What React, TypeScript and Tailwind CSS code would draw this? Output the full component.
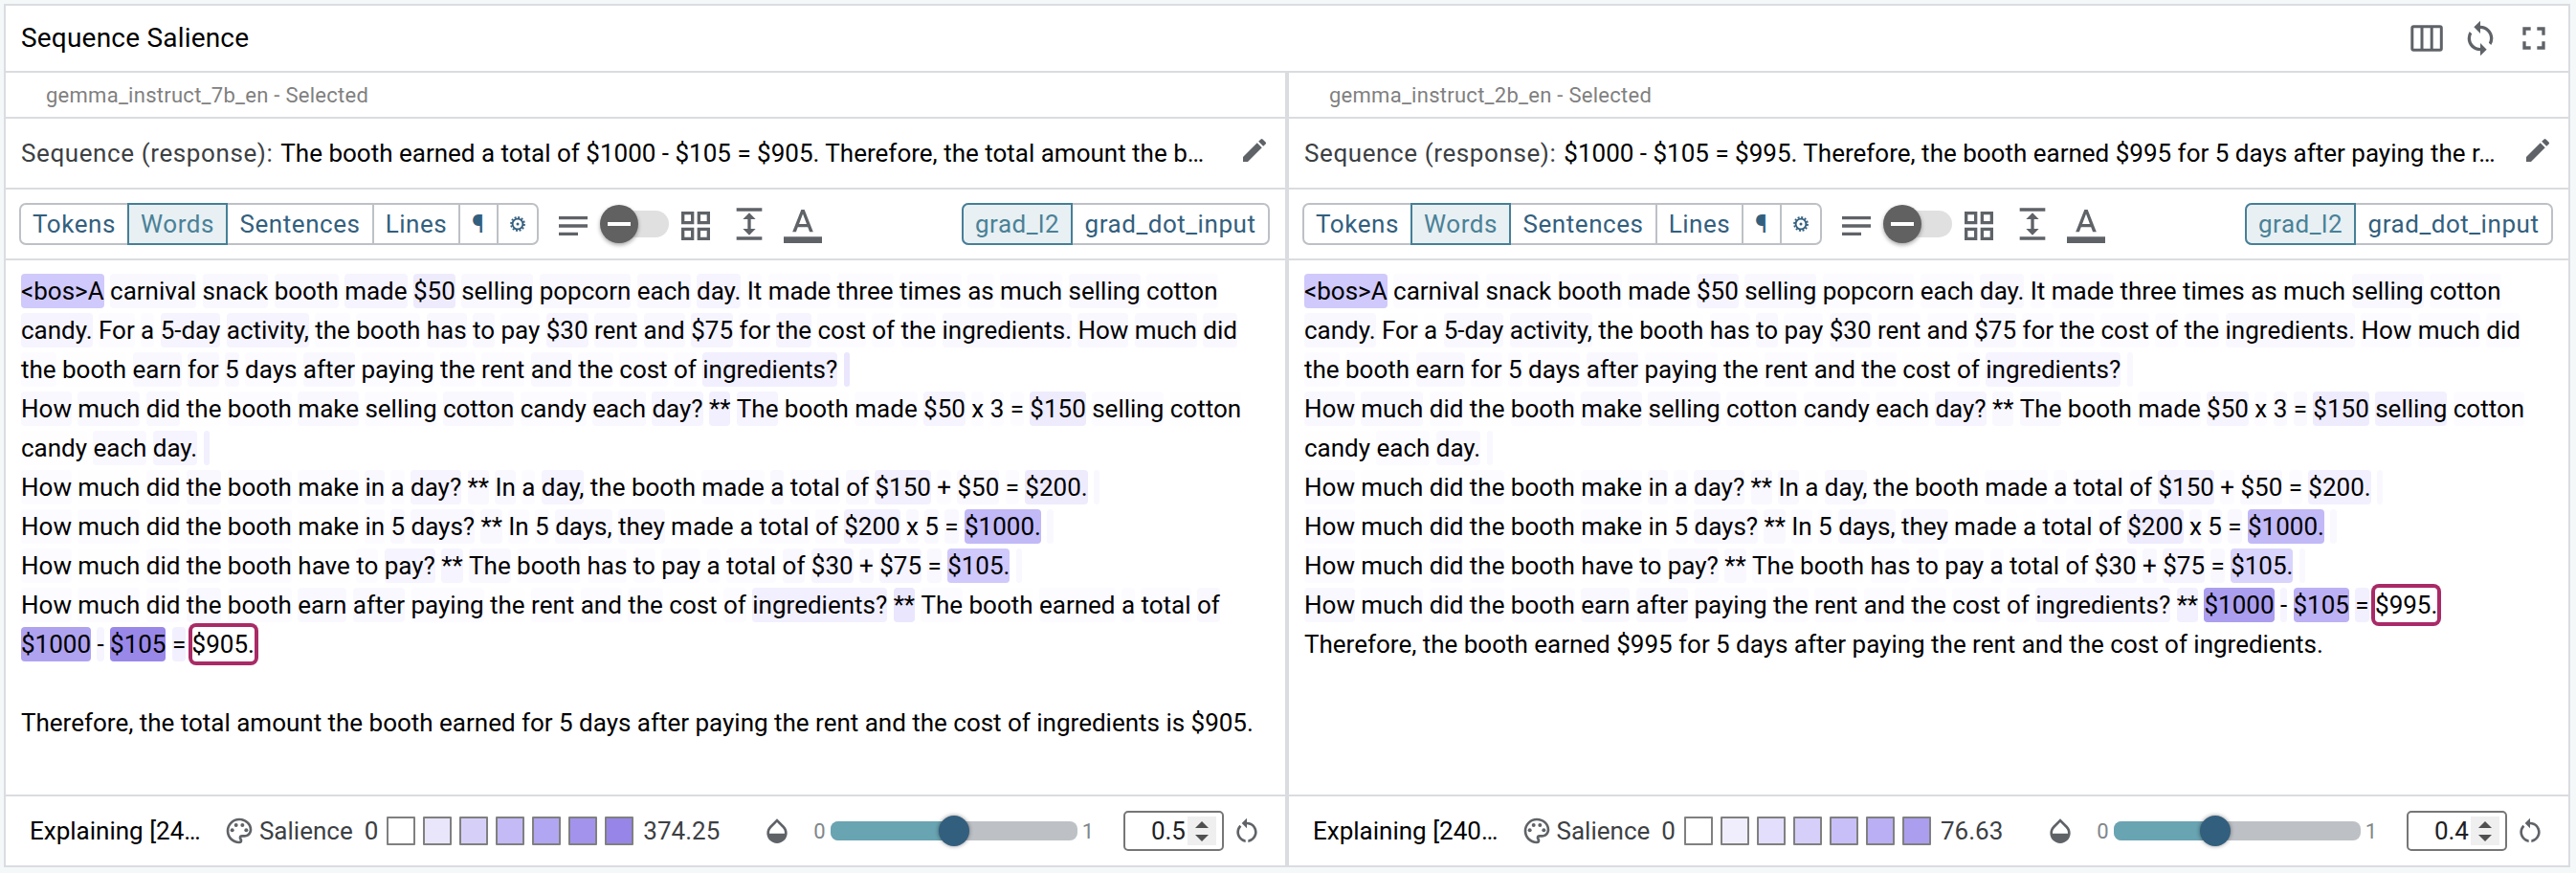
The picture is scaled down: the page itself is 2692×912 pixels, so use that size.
import type { ReactNode } from "react";
import {
  MdEdit,
  MdFullscreen,
  MdOpacity,
  MdOutlinePalette,
  MdRestartAlt,
  MdSync,
} from "react-icons/md";

/* Salience background per level; a token without a level uses "b". */
const LEVELS: Record<string, string> = {
  a: "bg-[#fefeff]",
  b: "bg-[#fcfbff]",
  c: "bg-[#f9f8ff]",
  d: "bg-[#f6f4fe]",
  e: "bg-[#f2f0fe]",
  f: "bg-[#eeebfd]",
  g: "bg-[#e9e6fd]",
  h: "bg-[#d9d4fc]",
  i: "bg-[#d0c9fb]",
  j: "bg-[#c2b9f7]",
  k: "bg-[#bcb1f5]",
  l: "bg-[#afa3ef]",
  m: "bg-[#ab9eee]",
  n: "bg-[#9988e8]",
  x: "bg-white ring-4 ring-[#a92a67]",
  "-": "",
};

/* Each token may end in "~level"; "_" is a whitespace token. */
const LEFT_LINES = [
  "<bos>A~i carnival~c snack~c booth~c made~d $50~f selling~c popcorn~c each~c day.~d It made three times as much selling~c cotton",
  "candy.~d For a 5-day~d activity,~d the booth has~c to~c pay $30~d rent~c and~c $75~d for the~d cost of the ingredients.~c How~c much~c did~c",
  "the booth~a earn~c for~c 5~c days after~c paying~b the rent and~c the cost of ingredients?~e _~g",
  "How~c much~c did~c the~a booth~b make~c selling cotton~c candy each~c day?~d **~e The~d booth~a made $50~d x 3 = $150~f selling cotton~a",
  "candy~a each~c day.~d _~e",
  "How much~a did~b the~c booth make in~c a day?~d **~c In~c a day,~d the~a booth~a made a~c total~b of~c $150~e + $50~c = $200.~f _~c",
  "How much did~a the booth make~a in 5~c days?~c **~c In 5 days,~c they~c made~a a~a total~b of~b $200~e x~c 5~c =~c $1000.~j _~c",
  "How much~a did the booth have~a to pay?~d **~d The~c booth has to pay a total of~c $30~d +~c $75~d =~c $105.~i _~c",
  "How much did~b the~c booth earn~c after~c paying the~a rent and the~b cost~a of ingredients?~e **~g The~b booth~a earned~b a total~b of~c",
  "$1000~l -~d $105~n =~e $905.~x",
  "",
  "Therefore,~- the~- total~- amount~- the~- booth~- earned~- for~- 5~- days~- after~- paying~- the~- rent~- and~- the~- cost~- of~- ingredients~- is~- $905.~-",
];

const RIGHT_LINES = [
  "<bos>A~i carnival~b snack booth~b made~b $50~d selling~c popcorn~b each~b day.~c It made~b three~a times~a as~a much~a selling~c cotton~b",
  "candy.~c For~a a~a 5-day~c activity,~c the~a booth~a has~b to~c pay~b $30~c rent~b and~b $75~c for~b the cost~b of~b the~b ingredients.~c How~b much~b did~b",
  "the~b booth~b earn~c for~b 5~b days~b after~c paying~b the~a rent~b and~b the~b cost~a of~b ingredients?~d _~c",
  "How~c much~c did~b the~a booth~b make~c selling~c cotton~b candy~b each~b day?~d **~c The~c booth~a made~b $50~d x~b 3~c =~c $150~f selling~e cotton~b",
  "candy~a each~b day.~c _~c",
  "How~b much~a did~a the~b booth~a make~b in~c a~b day?~c **~c In~c a~a day,~c the~a booth~a made~b a~b total~b of~b $150~e +~b $50~c =~b $200.~e _~c",
  "How~b much~a did~b the~a booth~a make~b in~a 5~b days?~c **~c In~b 5~b days,~c they~c made~a a~a total~b of~b $200~f x~c 5~c =~c $1000.~j _~c",
  "How~b much~a did~b the~b booth~a have~a to~b pay?~c **~c The~b booth~a has~b to~b pay~b a~b total~b of~b $30~c +~c $75~d =~c $105.~h _~c",
  "How~c much~b did~b the~b booth~b earn~c after~c paying~b the~b rent~b and~b the~b cost~b of~b ingredients?~d **~e $1000~m -~d $105~k =~e $995.~x",
  "Therefore,~- the~- booth~- earned~- $995~- for~- 5~- days~- after~- paying~- the~- rent~- and~- the~- cost~- of~- ingredients.~-",
];

function TokenLine({ line }: { line: string }) {
  return (
    <div className="flex h-9 gap-[6.4px] leading-9 whitespace-nowrap">
      {line
        .split(" ")
        .filter(Boolean)
        .map((token, i) => {
          const [text, level = "b"] = token.split("~");
          return (
            <span
              key={i}
              className={`rounded-[4px] ${text === "_" ? "w-[6.4px]" : ""} ${LEVELS[level]}`}
            >
              {text === "_" ? "" : text}
            </span>
          );
        })}
    </div>
  );
}

function ToolIcon({ d, className }: { d: string; className: string }) {
  return (
    <svg viewBox="0 0 24 24" className={`size-10 shrink-0 text-[#5f6368] ${className}`} fill="currentColor">
      <path d={d} />
    </svg>
  );
}

function Cell({ className, children }: { className: string; children: ReactNode }) {
  return <div className={`flex items-center justify-center ${className}`}>{children}</div>;
}

const SELECTED = "-my-0.5 border-2 border-[#467f97] bg-[#e8f0f3] text-[#4a8197]";

function Gear() {
  return (
    <svg viewBox="0 0 16 16" className="size-4">
      <circle cx="8" cy="8" r="5.4" fill="none" stroke="currentColor" strokeWidth="1.9" />
      <circle cx="8" cy="8" r="1.5" fill="currentColor" />
      <circle
        cx="8"
        cy="8"
        r="7"
        fill="none"
        stroke="currentColor"
        strokeWidth="1.8"
        strokeDasharray="2 1.665"
      />
    </svg>
  );
}

function Toolbar() {
  return (
    <div className="flex h-[74px] items-center border-b-2 border-[#dadce0] pr-4 pl-3.5">
      <div className="flex h-11 w-[543px] shrink-0 rounded-[7px] border-2 border-[#bdc1c6] tracking-[0.55px] text-[#335f7e]">
        <Cell className="w-[111px]">Tokens</Cell>
        <Cell className={`w-[105px] ${SELECTED}`}>Words</Cell>
        <Cell className="w-[153px] border-r-2 border-[#bdc1c6]">Sentences</Cell>
        <Cell className="w-[90px] border-r-2 border-[#bdc1c6]">Lines</Cell>
        <Cell className="w-10 border-r-2 border-[#bdc1c6]">¶</Cell>
        <Cell className="w-10">
          <Gear />
        </Cell>
      </div>
      <ToolIcon
        className="ml-4 -mb-1"
        d="M3 18h12v-2H3v2zM3 6v2h18V6H3zm0 7h18v-2H3v2z"
      />
      <div className="relative ml-2 flex h-10 w-[72px] shrink-0 items-center justify-end">
        <div className="h-7 w-[62px] rounded-full bg-[#e0e0e0]" />
        <div className="absolute top-0 left-0 flex size-10 items-center justify-center rounded-full bg-[#616161] shadow-[0_2px_4px_rgba(0,0,0,0.35)]">
          <div className="h-1 w-6 bg-white" />
        </div>
      </div>
      <ToolIcon
        className="ml-2 -mb-1"
        d="M3 3v8h8V3H3zm6 6H5V5h4v4zm-6 4v8h8v-8H3zm6 6H5v-4h4v4zm4-10V3h8v8h-8V9zm6 0V5h-4v4h4zm-6 4v8h8v-8h-8zm6 6h-4v-4h4v4z"
      />
      <ToolIcon
        className="ml-4"
        d="M4 20h16v2H4zM4 2h16v2H4zm9 7h3l-4-4-4 4h3v6H8l4 4 4-4h-3z"
      />
      <ToolIcon
        className="ml-4"
        d="M0 20h24v4H0zM11 3L5.500 17h2.250l1.120-3h6.250l1.120 3h2.250L13 3h-2zm-1.380 9L12 5.670 14.380 12H9.620z"
      />
      <div className="ml-auto flex h-11 w-[322px] shrink-0 rounded-[7px] border-2 border-[#bdc1c6] tracking-[0.55px] text-[#335f7e]">
        <Cell className={`-ml-0.5 w-[116px] rounded-l-[7px] ${SELECTED}`}>grad_l2</Cell>
        <Cell className="flex-1">grad_dot_input</Cell>
      </div>
    </div>
  );
}

const SWATCHES = [
  ["bg-white", "bg-[#e9e5fb]", "bg-[#d6d0f9]", "bg-[#c3baf6]", "bg-[#b1a6f1]", "bg-[#a393ed]", "bg-[#9786e8]"],
  ["bg-white", "bg-[#f0eefd]", "bg-[#e2defb]", "bg-[#d5cff9]", "bg-[#c8bff8]", "bg-[#baaff4]", "bg-[#ab9eee]"],
];

interface PanelProps {
  name: string;
  sequence: string;
  lines: string[];
  explaining: string;
  swatches: string[];
  max: string;
  gamma: number;
}

function Footer({ explaining, swatches, max, gamma }: PanelProps) {
  const thumb = gamma * (258 - 32);
  return (
    <div className="flex h-[74px] items-center border-t-2 border-[#dadce0] pr-6 pl-[25px] text-[#3c4043]">
      <div className="min-w-0 flex-1 whitespace-nowrap text-black">{explaining}</div>
      <MdOutlinePalette className="size-8 shrink-0 text-[#5f6368]" />
      <span className="ml-[5px]">Salience</span>
      <span className="ml-3">0</span>
      <div className="ml-[9px] flex gap-2">
        {swatches.map((c) => (
          <div key={c} className={`size-[30px] rounded-[1px] border-2 border-[#808080] ${c}`} />
        ))}
      </div>
      <span className="ml-2.5">{max}</span>
      <MdOpacity className="ml-11 size-8 shrink-0 text-[#5f6368]" />
      <div className="ml-[22px] flex items-center text-[22px] text-[#80868b]">
        0
        <div className="relative mx-[5px] flex h-5 w-[258px] overflow-visible rounded-lg bg-[#bdc1c6]">
          <div className="rounded-l-lg bg-[#69a4b2]" style={{ width: thumb + 16 }} />
          <div
            className="absolute -top-1.5 size-8 rounded-full bg-[#335f7e] shadow-[0_0_4px_rgba(0,0,0,0.45)]"
            style={{ left: thumb }}
          />
        </div>
        1
      </div>
      <div className="ml-[31px] flex h-[42px] w-[105px] shrink-0 items-center justify-end rounded-[5px] border-2 border-[#767676] pr-1.5 text-[#202124]">
        {gamma}
        <div className="ml-0.5 flex h-[30px] w-[30px] flex-col items-center justify-center gap-[7px] bg-[#efefef]">
          <svg viewBox="0 0 14 7" className="h-[7px] w-3.5" fill="#505050">
            <path d="M7 0l7 7H0z" />
          </svg>
          <svg viewBox="0 0 14 7" className="h-[7px] w-3.5" fill="#505050">
            <path d="M0 0h14L7 7z" />
          </svg>
        </div>
      </div>
      <MdRestartAlt className="ml-2 size-8 shrink-0 text-[#5f6368]" />
    </div>
  );
}

function Panel(props: PanelProps) {
  return (
    <section className="flex min-w-0 flex-1 flex-col border-[#dadce0] first:border-r-2 last:border-l-2">
      <div className="flex h-12 items-center border-b-2 border-[#dadce0] pl-[42px] text-[22px] tracking-[0.27px] text-[#808080]">
        {props.name} - Selected
      </div>
      <div className="flex h-[74px] items-center border-b-2 border-[#dadce0] pr-4 pl-4 whitespace-nowrap">
        <span className="tracking-[0.6px] text-[#3c4043]">Sequence (response):</span>
        <span className="ml-2 text-black">{props.sequence}</span>
        <MdEdit className="mb-1.5 ml-auto size-8 shrink-0 text-[#5f6368]" />
      </div>
      <Toolbar />
      <div className="flex flex-1 flex-col gap-[5px] px-4 pt-3.5">
        {props.lines.map((line, i) => (
          <TokenLine key={i} line={line} />
        ))}
      </div>
      <Footer {...props} />
    </section>
  );
}

export default function App() {
  return (
    <div className="h-[912px] w-[2692px] bg-[#f4f8f9] py-1 pr-1.5 pl-1 font-['Roboto',sans-serif] text-[26px] text-black">
      <div className="flex h-[902px] flex-col border-2 border-[#dadce0] bg-white">
        <header className="flex h-[70px] shrink-0 items-center gap-4 border-b-2 border-[#dadce0] pr-4 pl-4">
          <h1 className="text-[28px] tracking-[0.2px]">Sequence Salience</h1>
          <svg viewBox="0 0 40 40" className="ml-auto size-10 text-[#5f6368]" fill="none" stroke="currentColor" strokeWidth="3">
            <rect x="4.800" y="7.800" width="30.500" height="24.500" rx="1.500" />
            <path d="M15 8v24M25.200 8v24" />
          </svg>
          <MdSync className="size-10 text-[#5f6368]" />
          <MdFullscreen className="size-10 text-[#5f6368]" />
        </header>
        <main className="flex flex-1">
          <Panel
            name="gemma_instruct_7b_en"
            sequence="The booth earned a total of $1000 - $105 = $905. Therefore, the total amount the b…"
            lines={LEFT_LINES}
            explaining="Explaining [24…"
            swatches={SWATCHES[0]}
            max="374.25"
            gamma={0.5}
          />
          <Panel
            name="gemma_instruct_2b_en"
            sequence="$1000 - $105 = $995. Therefore, the booth earned $995 for 5 days after paying the r…"
            lines={RIGHT_LINES}
            explaining="Explaining [240…"
            swatches={SWATCHES[1]}
            max="76.63"
            gamma={0.4}
          />
        </main>
      </div>
    </div>
  );
}
